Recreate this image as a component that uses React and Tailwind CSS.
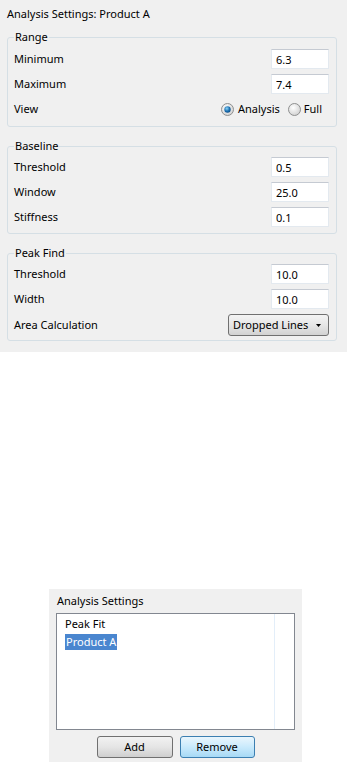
import React from "react";

const font = { fontFamily: '"Noto Sans", "Open Sans", sans-serif' };

const Field = ({ label, value }) => (
  <div className="flex h-[20px] items-center justify-between">
    <span>{label}</span>
    <input
      readOnly
      value={value}
      className="h-[20px] w-[58px] border border-[#e3e9ef] border-t-[#c5cad2] bg-white px-[4px] text-[11px] text-black outline-none"
    />
  </div>
);

const GroupBox = ({ title, children, className = "" }) => (
  <fieldset
    className={`rounded-[3px] border border-[#d5dfe5] pl-[6px] pr-[7px] ${className}`}
  >
    <legend className="px-[1px] leading-[16px]">{title}</legend>
    <div className="flex flex-col gap-[5px]">{children}</div>
  </fieldset>
);

const Radio = ({ checked }) => (
  <svg width="13" height="13" viewBox="0 0 13 13">
    <defs>
      <radialGradient id="rbg" cx="40%" cy="35%" r="70%">
        <stop offset="0%" stopColor="#ffffff" />
        <stop offset="100%" stopColor="#cfcfcf" />
      </radialGradient>
      <radialGradient id="rdot" cx="40%" cy="35%" r="70%">
        <stop offset="0%" stopColor="#8ad4f8" />
        <stop offset="60%" stopColor="#1c6fb0" />
        <stop offset="100%" stopColor="#0c4d86" />
      </radialGradient>
    </defs>
    <circle cx="6.5" cy="6.5" r="6" fill="url(#rbg)" stroke="#8e8f8f" />
    {checked && <circle cx="6.5" cy="6.5" r="3.2" fill="url(#rdot)" />}
  </svg>
);

export default function App() {
  return (
    <div
      className="h-[762px] w-[347px] bg-white text-[11px] leading-[16px] text-black"
      style={font}
    >
      <div className="h-[352px] bg-[#f0f0f0] pl-[7px] pr-[10px] pt-[6px]">
        <div>Analysis Settings: Product A</div>

        <GroupBox title="Range" className="mt-[7px] pb-[7px] pt-[4px]">
          <Field label="Minimum" value="6.3" />
          <Field label="Maximum" value="7.4" />
          <div className="flex h-[20px] items-center justify-between">
            <span>View</span>
            <div className="mr-[7px] flex items-center">
              <Radio checked />
              <span className="ml-[4px]">Analysis</span>
              <span className="ml-[8px] flex">
                <Radio />
              </span>
              <span className="ml-[3px]">Full</span>
            </div>
          </div>
        </GroupBox>

        <GroupBox title="Baseline" className="mt-[11px] pb-[6px] pt-[3px]">
          <Field label="Threshold" value="0.5" />
          <Field label="Window" value="25.0" />
          <Field label="Stiffness" value="0.1" />
        </GroupBox>

        <GroupBox title="Peak Find" className="mt-[11px] pb-[4px] pt-[3px]">
          <Field label="Threshold" value="10.0" />
          <Field label="Width" value="10.0" />
          <div className="flex h-[22px] items-center justify-between">
            <span>Area Calculation</span>
            <div className="flex h-[22px] w-[101px] items-center justify-between whitespace-nowrap rounded-[3px] border border-[#707070] bg-gradient-to-b from-[#f4f4f4] via-[#e6e6e6] to-[#d2d2d2] pl-[4px] pr-[7px]">
              <span>Dropped Lines</span>
              <svg width="5" height="3" viewBox="0 0 5 3">
                <path d="M0 0H5L2.5 3Z" fill="#000" />
              </svg>
            </div>
          </div>
        </GroupBox>
      </div>

      <div className="ml-[49px] mt-[237px] h-[173px] w-[253px] bg-[#f0f0f0] px-[7px] pt-[4px]">
        <div className="pl-[1px]">Analysis Settings</div>
        <div className="mt-[4px] flex h-[117px] w-[239px] border border-[#828790] bg-white">
          <div className="w-[218px] border-r border-[#e3eef9] pl-[8px] pt-[2px]">
            <div className="h-[17px]">Peak Fit</div>
            <div className="flex h-[17px] items-center">
              <span className="bg-[#4a86cf] px-[1px] text-white">
                Product A
              </span>
            </div>
          </div>
        </div>
        <div className="mt-[6px] flex w-[239px] justify-center gap-[7px]">
          <button className="h-[22px] w-[76px] rounded-[3px] border border-[#707070] bg-gradient-to-b from-[#f2f2f2] via-[#e5e5e5] to-[#cfcfcf]">
            Add
          </button>
          <button className="h-[22px] w-[75px] rounded-[3px] border border-[#3c7fb1] bg-gradient-to-b from-[#eaf6fd] via-[#c9eafc] to-[#a7d9f5]">
            Remove
          </button>
        </div>
      </div>
    </div>
  );
}
